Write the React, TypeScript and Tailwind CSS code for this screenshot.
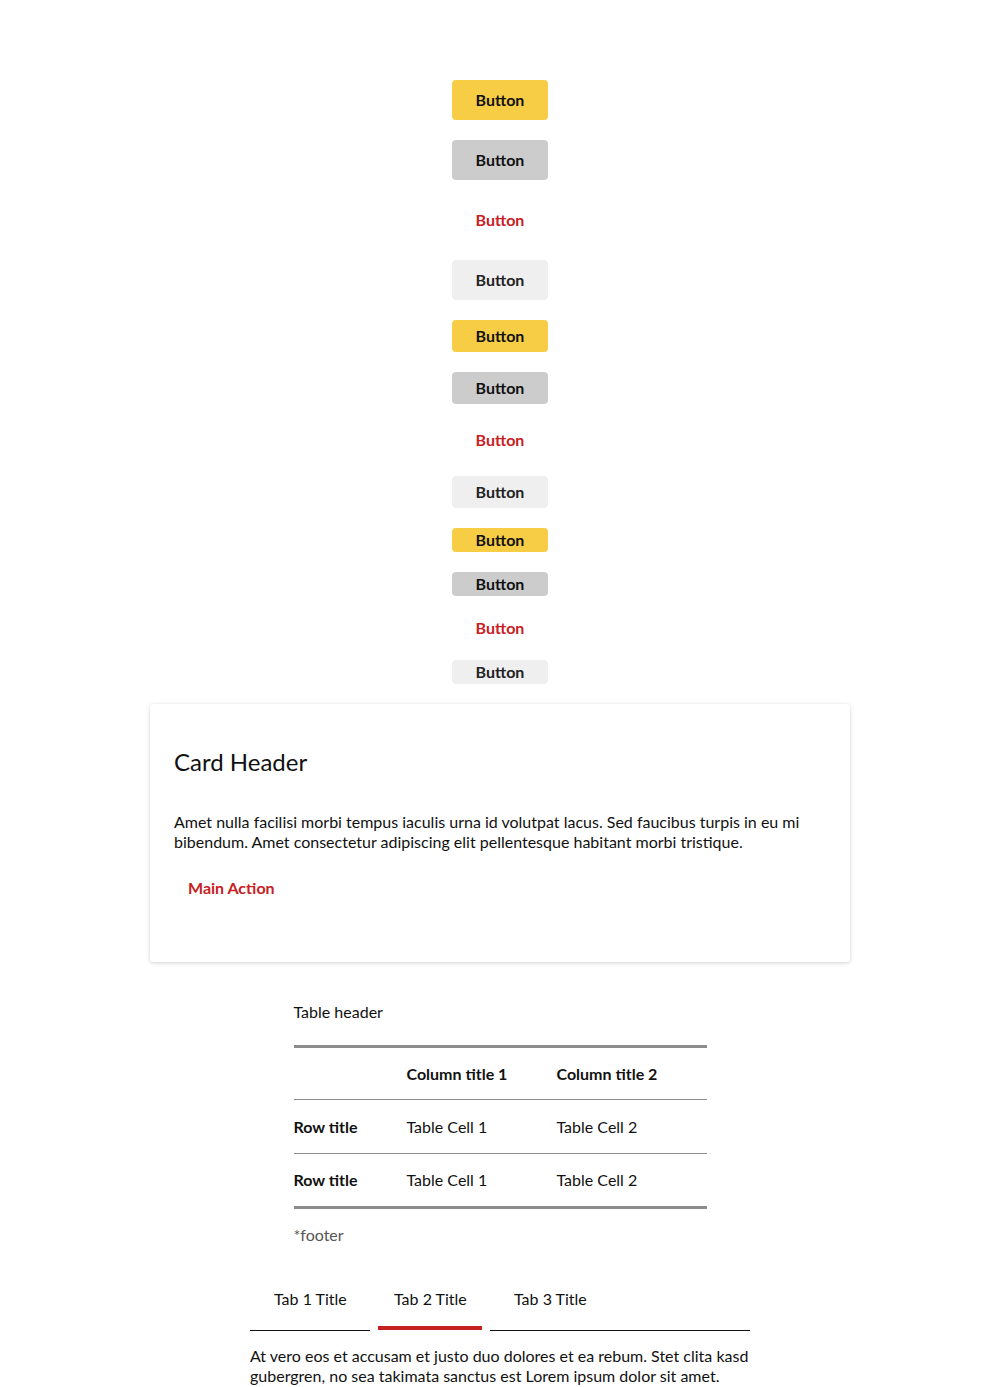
import React from "react";

type Variant = "primary" | "secondary" | "text" | "light";
type Size = "lg" | "md" | "sm";

const variantClass: Record<Variant, string> = {
  primary: "bg-[#f8cd46] text-[#111]",
  secondary: "bg-[#cccccc] text-[#111]",
  text: "bg-transparent text-[#c8201f]",
  light: "bg-[#efefef] text-[#222]",
};

const sizeClass: Record<Size, string> = {
  lg: "h-10",
  md: "h-8",
  sm: "h-6",
};

function Button({ variant, size }: { variant: Variant; size: Size }) {
  return (
    <button
      className={`flex w-24 items-center justify-center rounded-[4px] text-[16px] font-bold ${variantClass[variant]} ${sizeClass[size]}`}
    >
      Button
    </button>
  );
}

const variants: Variant[] = ["primary", "secondary", "text", "light"];
const sizes: Size[] = ["lg", "md", "sm"];

const rows = [
  { title: "Row title", a: "Table Cell 1", b: "Table Cell 2" },
  { title: "Row title", a: "Table Cell 1", b: "Table Cell 2" },
];

export default function App() {
  return (
    <div className="min-h-[1387px] bg-white pb-10 pt-20 text-[16px] text-[#111] font-['Lato','Noto_Sans',sans-serif]">
      {/* Buttons */}
      <div className="flex flex-col items-center gap-5">
        {sizes.map((s) =>
          variants.map((v) => <Button key={s + v} variant={v} size={s} />)
        )}
      </div>

      {/* Card */}
      <div className="mx-auto mt-5 w-[700px] rounded-[4px] bg-white px-6 pb-[58px] pt-[42px] shadow-[0_1px_4px_rgba(0,0,0,0.18)]">
        <h2 className="text-[24px] leading-[32px]">Card Header</h2>
        <p className="mt-[34px] leading-[20px]">
          Amet nulla facilisi morbi tempus iaculis urna id volutpat lacus. Sed faucibus turpis in eu
          mi bibendum. Amet consectetur adipiscing elit pellentesque habitant morbi tristique.
        </p>
        <button className="mt-[20px] px-[14px] py-[6px] text-[16px] font-bold leading-[20px] text-[#c8201f]">
          Main Action
        </button>
      </div>

      {/* Table */}
      <div className="mx-auto mt-[40px] w-[413px]">
        <p className="leading-[20px]">Table header</p>
        <table className="mt-[23px] w-full border-y-[3px] border-[#8c8c8c] text-left">
          <thead>
            <tr className="h-[53px] border-b border-[#8c8c8c]">
              <th className="w-[113px]" />
              <th className="w-[150px] font-bold">Column title 1</th>
              <th className="font-bold">Column title 2</th>
            </tr>
          </thead>
          <tbody>
            {rows.map((r, i) => (
              <tr
                key={i}
                className={`h-[54px] ${i < rows.length - 1 ? "border-b border-[#8c8c8c]" : ""}`}
              >
                <td className="font-bold">{r.title}</td>
                <td>{r.a}</td>
                <td>{r.b}</td>
              </tr>
            ))}
          </tbody>
        </table>
        <p className="mt-[16px] leading-[20px] text-[#555]">*footer</p>
      </div>

      {/* Tabs */}
      <div className="mx-auto mt-[40px] w-[500px]">
        <div className="flex">
          <div className="w-[120px] whitespace-nowrap border-b border-[#111] pb-[21px] pl-6 pt-[4px] leading-[20px]">
            Tab 1 Title
          </div>
          <div className="flex w-[120px] flex-col px-2">
            <div className="whitespace-nowrap pb-[17px] pl-4 pt-[4px] leading-[20px]">
              Tab 2 Title
            </div>
            <div className="h-1 bg-[#c8201f]" />
          </div>
          <div className="flex-1 whitespace-nowrap border-b border-[#111] pb-[21px] pl-6 pt-[4px] leading-[20px]">
            Tab 3 Title
          </div>
        </div>
        <p className="mt-[15px] leading-[20px]">
          At vero eos et accusam et justo duo dolores et ea rebum. Stet clita kasd gubergren, no sea
          takimata sanctus est Lorem ipsum dolor sit amet.
        </p>
      </div>
    </div>
  );
}
